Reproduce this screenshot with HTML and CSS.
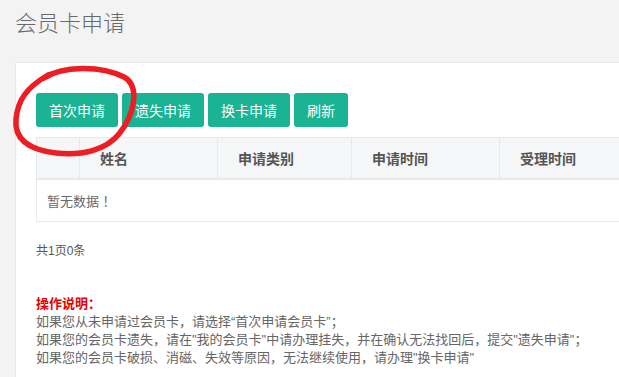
FILE: index.html
```html
<!DOCTYPE html>
<html lang="zh-CN">

<head>
    <meta charset="UTF-8">
    <meta name="viewport" content="width=device-width, initial-scale=1.0">
    <title>会员卡申请</title>
    <link rel="stylesheet" href="styles.css">
</head>

<body>
    <div class="page">
        <h2 class="page-title">会员卡申请</h2>

        <div class="panel">
            <div class="toolbar">
                <button class="btn">首次申请</button>
                <button class="btn">遗失申请</button>
                <button class="btn">换卡申请</button>
                <button class="btn">刷新</button>
            </div>

            <table class="grid">
                <colgroup>
                    <col class="col-check">
                    <col class="col-name">
                    <col class="col-type">
                    <col class="col-time">
                    <col class="col-accept">
                </colgroup>
                <thead>
                    <tr>
                        <th></th>
                        <th>姓名</th>
                        <th>申请类别</th>
                        <th>申请时间</th>
                        <th>受理时间</th>
                    </tr>
                </thead>
                <tbody>
                    <tr>
                        <td colspan="5">暂无数据 ！</td>
                    </tr>
                </tbody>
            </table>

            <div class="pager">共1页0条</div>

            <div class="notes">
                <div class="notes-title">操作说明：</div>
                <div>如果您从未申请过会员卡，请选择“首次申请会员卡”；</div>
                <div>如果您的会员卡遗失，请在"我的会员卡"中请办理挂失，并在确认无法找回后，提交"遗失申请"；</div>
                <div>如果您的会员卡破损、消磁、失效等原因，无法继续使用，请办理"换卡申请"</div>
            </div>
        </div>
    </div>

    <!-- hand-drawn mark around the first button -->
    <svg class="scribble" width="619" height="377" viewBox="0 0 619 377">
        <path d="M44 78 C62 66, 100 65, 124 77 C140 86, 135 114, 119 134 C106 150, 82 156, 56 153 C30 150, 14 140, 16 119 C18 100, 26 88, 48 75"
            fill="none" stroke="#ee1d23" stroke-width="5.5" stroke-linecap="round" stroke-linejoin="round" />
    </svg>
</body>

</html>
```

FILE: styles.css
```css
body {
    margin: 0;
    background-color: #f3f3f4;
    font-family: "Liberation Sans", "Noto Sans CJK SC", sans-serif;
    color: #676a6c;
}

.page {
    height: 377px;
    padding-left: 15px;
    overflow: hidden;
}

.page-title {
    margin: 12px 0 26px;
    font-size: 22px;
    font-weight: 300;
    line-height: 24px;
    color: #676a6c;
}

.panel {
    width: 720px;
    height: 315px;
    padding: 30px 0 0 20px;
    background-color: #fff;
    border: 1px solid #e7eaec;
    border-bottom: none;
    border-radius: 2px 2px 0 0;
}

.toolbar {
    display: flex;
    gap: 4px;
}

.btn {
    height: 34px;
    padding: 0 13px;
    background-color: #1ab394;
    color: #fff;
    border: none;
    border-radius: 3px;
    font-family: "Liberation Sans", "Noto Sans CJK SC", sans-serif;
    font-size: 14px;
    cursor: pointer;
}

.grid {
    margin-top: 10px;
    width: 700px;
    table-layout: fixed;
    border-collapse: collapse;
    border: 1px solid #e7eaec;
}

.col-check {
    width: 43px;
}

.col-name {
    width: 138px;
}

.col-type {
    width: 134px;
}

.col-time {
    width: 148px;
}

.grid th {
    height: 40px;
    padding: 0 20px;
    text-align: left;
    font-size: 14px;
    font-weight: bold;
    color: #555;
    background-color: #f5f6f8;
    border-right: 1px solid #e7eaec;
    border-bottom: 2px solid #e7eaec;
}

.grid td {
    height: 41px;
    padding: 0 10px;
    font-size: 13px;
    color: #676a6c;
}

.pager {
    margin-top: 20px;
    font-size: 12px;
    line-height: 18px;
    color: #555;
}

.notes {
    margin-top: 35px;
    font-size: 13px;
    line-height: 18px;
    color: #666;
}

.notes-title {
    color: #e60000;
    font-weight: bold;
}

.scribble {
    position: absolute;
    top: 0;
    left: 0;
    pointer-events: none;
}
```
